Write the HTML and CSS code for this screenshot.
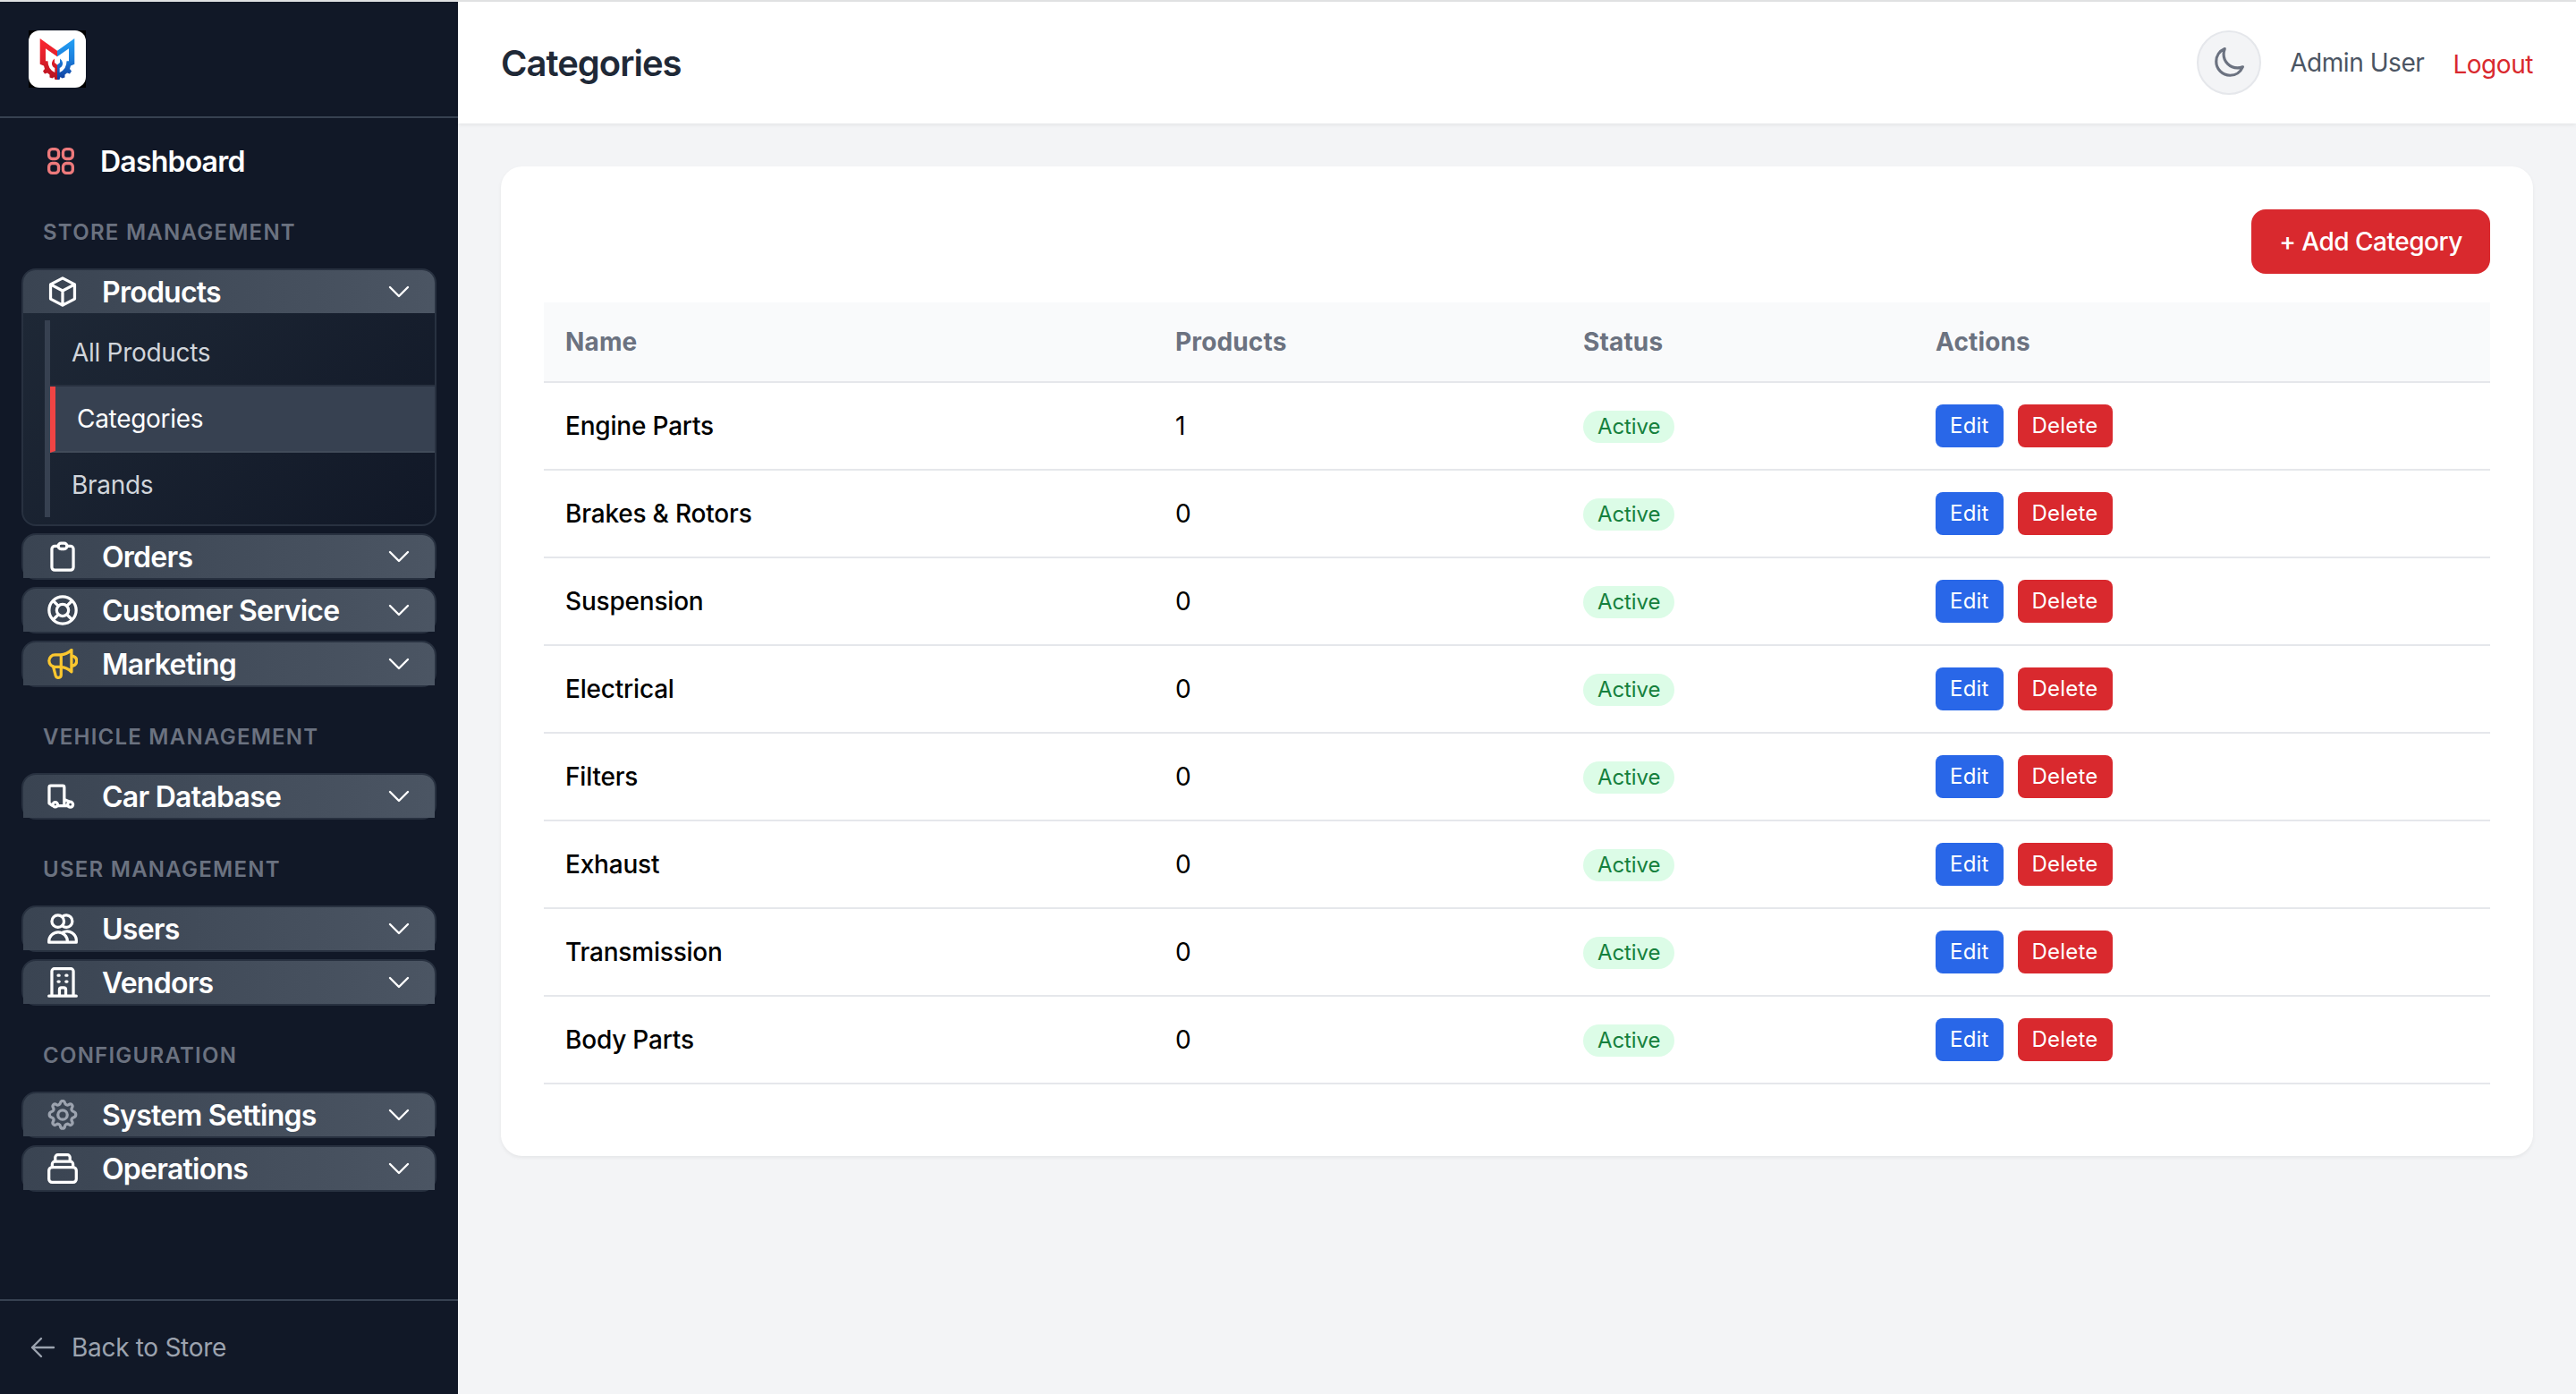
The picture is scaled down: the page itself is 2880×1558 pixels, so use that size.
FILE: index.html
```
<!DOCTYPE html>
<html lang="en">
<head>
	<meta charset="UTF-8">
	<title>Categories</title>
	<link rel="stylesheet" href="styles.css">
</head>
<body>
	<div class="layout">
		<aside class="sidebar">
			<div class="brand">
				<svg class="logo" viewBox="0 0 64 64">
					<defs>
						<linearGradient id="red" x1="0" y1="0" x2="0" y2="1">
							<stop offset="0" stop-color="#fb2530"/>
							<stop offset="0.500" stop-color="#e01f2b"/>
							<stop offset="1" stop-color="#b3121f"/>
						</linearGradient>
						<linearGradient id="blue" x1="0" y1="0" x2="0" y2="1">
							<stop offset="0" stop-color="#22a0f5"/>
							<stop offset="0.500" stop-color="#1c7fdc"/>
							<stop offset="1" stop-color="#0f3c9c"/>
						</linearGradient>
					</defs>
					<rect width="64" height="64" fill="#000"/>
					<rect width="64" height="64" rx="12" fill="#fff"/>
					<path fill="url(#red)" d="M12.700 9 L32 22.700 V29.300 L19 20.300 V34.300 H21.500 Q21.500 43.500 29.300 47 V42 Q25.500 40 26 36 Q26.500 33 29 31.500 V36 L32 38.500 V55 H29.500 L28.500 52 L26.500 53.500 L23.500 52.500 L23.500 49.500 L21 47.500 L18 48.500 L16 45.500 L18 43 L17 39.500 L12.700 37.700 Z"/>
					<path fill="url(#blue)" d="M51.300 9 L32 22.700 V29.300 L45 20.300 V34.300 H42.500 Q42.500 43.500 34.700 47 V42 Q38.500 40 38 36 Q37.500 33 35 31.500 V36 L32 38.500 V55 H34.500 L35.500 52 L37.500 53.500 L40.500 52.500 L40.500 49.500 L43 47.500 L46 48.500 L48 45.500 L46 43 L47 39.500 L51.300 37.700 Z"/>
				</svg>
			</div>

			<nav class="nav">
				<a class="dashboard">
					<svg class="icon icon-red" viewBox="0 0 24 24"><rect x="4" y="4" width="6.500" height="6.500" rx="2.200"/><rect x="13.500" y="4" width="6.500" height="6.500" rx="2.200"/><rect x="4" y="13.500" width="6.500" height="6.500" rx="2.200"/><rect x="13.500" y="13.500" width="6.500" height="6.500" rx="2.200"/></svg>
					<span>Dashboard</span>
				</a>

				<h2 class="section">Store Management</h2>
				<div class="group">
					<div class="group-head">
						<svg class="icon" viewBox="0 0 24 24"><path d="M12 1.300 21.500 6.300V17.700L12 22.700 2.500 17.700V6.300ZM2.500 6.300 12 11.300 21.500 6.300M12 11.300V22.700"/></svg>
						<span>Products</span>
						<svg class="chevron" viewBox="0 0 24 24"><path d="m19.500 8.250-7.500 7.500-7.500-7.500"/></svg>
					</div>
					<div class="submenu">
						<a>All Products</a>
						<a class="current">Categories</a>
						<a>Brands</a>
					</div>
				</div>
				<div class="group">
					<div class="group-head">
						<svg class="icon" viewBox="0 0 24 24"><path d="M8.500 3.800H5.700A2.200 2.200 0 0 0 3.500 6V20.500a2.200 2.200 0 0 0 2.200 2.200h12.600a2.200 2.200 0 0 0 2.200-2.200V6a2.200 2.200 0 0 0-2.200-2.200H15.500"/><rect x="8.500" y="1.500" width="7" height="4.500" rx="2.250"/></svg>
						<span>Orders</span>
						<svg class="chevron" viewBox="0 0 24 24"><path d="m19.500 8.250-7.500 7.500-7.500-7.500"/></svg>
					</div>
				</div>
				<div class="group">
					<div class="group-head">
						<svg class="icon" viewBox="0 0 24 24"><circle cx="12" cy="12" r="10.700"/><circle cx="12" cy="12" r="4.700"/><path d="M4.600 4.600l4 4M15.400 15.400l4 4M19.400 4.600l-4 4M8.600 15.400l-4 4"/></svg>
						<span>Customer Service</span>
						<svg class="chevron" viewBox="0 0 24 24"><path d="m19.500 8.250-7.500 7.500-7.500-7.500"/></svg>
					</div>
				</div>
				<div class="group">
					<div class="group-head">
						<svg class="icon icon-yellow" viewBox="0 0 24 24"><path d="M10.300 14.300H6A4.700 4.700 0 0 1 6 4.900h4.300C13.500 4.700 16.800 3.200 19 1M10.800 4.900v9.400M19 1v17.200M19 18.200c-2.200-2.200-5.400-3.700-8.700-3.900M4.600 14.100 6.500 21.300A2.200 2.200 0 0 0 10.800 20.900V14.300M19 5.500c3 .5 4.100 2 4.100 4.100S22 13.300 19 13.800"/></svg>
						<span>Marketing</span>
						<svg class="chevron" viewBox="0 0 24 24"><path d="m19.500 8.250-7.500 7.500-7.500-7.500"/></svg>
					</div>
				</div>

				<h2 class="section">Vehicle Management</h2>
				<div class="group">
					<div class="group-head">
						<svg class="icon" viewBox="0 0 24 24"><path d="M4 19.300 1.400 17.500V5A1.300 1.300 0 0 1 2.700 3.700H12A1.300 1.300 0 0 1 13.300 5v14.500H8.500M13.300 19.500H16M13.300 14.500 17 16"/><circle cx="6.200" cy="18.500" r="1.900"/><circle cx="18.100" cy="18.500" r="2.100"/></svg>
						<span>Car Database</span>
						<svg class="chevron" viewBox="0 0 24 24"><path d="m19.500 8.250-7.500 7.500-7.500-7.500"/></svg>
					</div>
				</div>

				<h2 class="section">User Management</h2>
				<div class="group">
					<div class="group-head">
						<svg class="icon" viewBox="0 0 24 24"><circle cx="8.300" cy="6.100" r="4.800"/><path d="M11.700 2.500a4.800 4.800 0 1 1 0 7.200M1.200 22.700V22a7.300 7.300 0 0 1 14.600 0v.700ZM12 15a7.300 7.300 0 0 1 10.800 7v.700h-7"/></svg>
						<span>Users</span>
						<svg class="chevron" viewBox="0 0 24 24"><path d="m19.500 8.250-7.500 7.500-7.500-7.500"/></svg>
					</div>
				</div>
				<div class="group">
					<div class="group-head">
						<svg class="icon" viewBox="0 0 24 24"><path d="M1.200 22.700h21.600M3.500 22.700V3.200A2 2 0 0 1 5.500 1.200h13a2 2 0 0 1 2 2v19.500M8.500 6.500h.800M14.700 6.500h.800M8.500 11.300h.800M14.700 11.300h.800M9.500 22.700V17.700a1.500 1.500 0 0 1 1.500-1.500h2a1.500 1.500 0 0 1 1.500 1.500v5"/></svg>
						<span>Vendors</span>
						<svg class="chevron" viewBox="0 0 24 24"><path d="m19.500 8.250-7.500 7.500-7.500-7.500"/></svg>
					</div>
				</div>

				<h2 class="section">Configuration</h2>
				<div class="group">
					<div class="group-head">
						<svg class="icon icon-gray" viewBox="0 0 24 24"><circle cx="12" cy="12" r="3.700"/><path d="M10.200 2.600C10.600.500 13.400.500 13.800 2.600c.300 1.500 1.900 2.100 3.100 1.300 1.700-1.300 3.700.700 2.500 2.500-.800 1.200-.200 2.800 1.300 3.100 2.300.600 2.300 3.900 0 4.500-1.500.300-2.100 1.900-1.300 3.100 1.200 1.900-.700 3.800-2.500 2.500-1.200-.800-2.800-.200-3.100 1.300-.400 2.400-3.200 2.400-3.600 0-.300-1.500-1.900-2.100-3.100-1.300-1.800 1.300-3.700-.600-2.500-2.500.800-1.200.200-2.800-1.300-3.100-2.300-.600-2.300-3.900 0-4.500 1.500-.300 2.100-1.900 1.300-3.100-1.200-1.800.800-3.800 2.500-2.500 1.200.800 2.800.200 3.100-1.300Z"/></svg>
						<span>System Settings</span>
						<svg class="chevron" viewBox="0 0 24 24"><path d="m19.500 8.250-7.500 7.500-7.500-7.500"/></svg>
					</div>
				</div>
				<div class="group">
					<div class="group-head">
						<svg class="icon" viewBox="0 0 24 24"><rect x="1.200" y="11" width="21.600" height="11.800" rx="2.500"/><path d="M3.800 11V8.500A2 2 0 0 1 5.800 6.500h12.400a2 2 0 0 1 2 2V11M6.200 6.500V3.200A2 2 0 0 1 8.200 1.200h7.600a2 2 0 0 1 2 2v3.300"/></svg>
						<span>Operations</span>
						<svg class="chevron" viewBox="0 0 24 24"><path d="m19.500 8.250-7.500 7.500-7.500-7.500"/></svg>
					</div>
				</div>
			</nav>

			<a class="back">
				<svg class="back-icon" viewBox="0 0 24 24"><path d="M10.500 19.500 3 12m0 0 7.500-7.500M3 12h18"/></svg>
				<span>Back to Store</span>
			</a>
		</aside>

		<div class="main">
			<header class="topbar">
				<h1>Categories</h1>
				<div class="user">
					<button class="theme">
						<svg class="moon" viewBox="0 0 24 24"><path d="M21.752 15.002A9.720 9.720 0 0 1 18 15.750c-5.385 0-9.750-4.365-9.750-9.750 0-1.330.266-2.597.748-3.752A9.753 9.753 0 0 0 3 11.250C3 16.635 7.365 21 12.750 21a9.753 9.753 0 0 0 9.002-5.998Z"/></svg>
					</button>
					<span class="username">Admin User</span>
					<a class="logout">Logout</a>
				</div>
			</header>

			<div class="card">
				<div class="toolbar">
					<a class="add">+ Add Category</a>
				</div>
				<table class="table">
					<thead>
						<tr>
							<th class="col-name">Name</th>
							<th class="col-products">Products</th>
							<th class="col-status">Status</th>
							<th>Actions</th>
						</tr>
					</thead>
					<tbody>
						<tr>
							<td class="name">Engine Parts</td>
							<td>1</td>
							<td><span class="badge">Active</span></td>
							<td><div class="actions"><a class="btn edit">Edit</a><a class="btn delete">Delete</a></div></td>
						</tr>
						<tr>
							<td class="name">Brakes &amp; Rotors</td>
							<td>0</td>
							<td><span class="badge">Active</span></td>
							<td><div class="actions"><a class="btn edit">Edit</a><a class="btn delete">Delete</a></div></td>
						</tr>
						<tr>
							<td class="name">Suspension</td>
							<td>0</td>
							<td><span class="badge">Active</span></td>
							<td><div class="actions"><a class="btn edit">Edit</a><a class="btn delete">Delete</a></div></td>
						</tr>
						<tr>
							<td class="name">Electrical</td>
							<td>0</td>
							<td><span class="badge">Active</span></td>
							<td><div class="actions"><a class="btn edit">Edit</a><a class="btn delete">Delete</a></div></td>
						</tr>
						<tr>
							<td class="name">Filters</td>
							<td>0</td>
							<td><span class="badge">Active</span></td>
							<td><div class="actions"><a class="btn edit">Edit</a><a class="btn delete">Delete</a></div></td>
						</tr>
						<tr>
							<td class="name">Exhaust</td>
							<td>0</td>
							<td><span class="badge">Active</span></td>
							<td><div class="actions"><a class="btn edit">Edit</a><a class="btn delete">Delete</a></div></td>
						</tr>
						<tr>
							<td class="name">Transmission</td>
							<td>0</td>
							<td><span class="badge">Active</span></td>
							<td><div class="actions"><a class="btn edit">Edit</a><a class="btn delete">Delete</a></div></td>
						</tr>
						<tr>
							<td class="name">Body Parts</td>
							<td>0</td>
							<td><span class="badge">Active</span></td>
							<td><div class="actions"><a class="btn edit">Edit</a><a class="btn delete">Delete</a></div></td>
						</tr>
					</tbody>
				</table>
			</div>
		</div>
	</div>
</body>
</html>
```
FILE: styles.css
```
* {
	margin: 0;
	padding: 0;
	box-sizing: border-box;
}
body {
	font-family: Inter, "Liberation Sans", sans-serif;
	font-size: 28px;
	letter-spacing: -0.3px;
	background: #f3f4f6;
	color: #000;
}
.layout {
	display: flex;
	height: 1558px;
	overflow: hidden;
	border-top: 2px solid #e0e1e2;
}
svg {
	display: block;
	flex: none;
	fill: none;
	stroke: currentColor;
	stroke-width: 1.5;
	stroke-linecap: round;
	stroke-linejoin: round;
}

/* sidebar */
.sidebar {
	width: 512px;
	flex: none;
	display: flex;
	flex-direction: column;
	background: #111827;
	color: #fff;
}
.brand {
	padding: 32px;
	border-bottom: 2px solid #374151;
}
.logo {
	width: 64px;
	height: 64px;
	stroke: none;
}
.nav {
	flex: 1;
	padding: 24px 24px 0;
}
.icon {
	width: 40px;
	height: 40px;
	stroke-width: 2;
}
.icon-red {
	color: #ee7a7c;
}
.icon-yellow {
	color: #fbc72f;
}
.icon-gray {
	color: #9ca3af;
}
.group-head .icon {
	width: 34px;
	height: 34px;
	margin: 0 3px;
	stroke-width: 2.3;
}
.dashboard {
	display: flex;
	align-items: center;
	gap: 24px;
	height: 48px;
	padding: 0 24px;
	font-size: 32px;
	font-weight: 600;
	letter-spacing: -0.8px;
}
.section {
	padding: 38px 24px 22px;
	font-size: 24px;
	line-height: 36px;
	font-weight: 600;
	letter-spacing: 1.25px;
	text-transform: uppercase;
	color: #6b7280;
}
.group {
	border: 2px solid #283140;
	border-radius: 16px;
	margin-bottom: 8px;
	background: linear-gradient(135deg, #1f2937, #111827);
}
.group:has(+ .section),
.group:last-child {
	margin-bottom: 0;
}
.group-head {
	display: flex;
	align-items: center;
	height: 48px;
	padding: 0 24px;
	border-radius: 14px 14px 0 0;
	background: linear-gradient(90deg, #3a4452, #4b5563);
	font-size: 32px;
	font-weight: 600;
	letter-spacing: -0.75px;
}
.group-head span {
	flex: 1;
	margin-left: 24px;
}
.chevron {
	width: 32px;
	height: 32px;
	stroke-width: 1.8;
}
.submenu {
	margin: 8px 0 8px 24px;
	border-left: 6px solid #374151;
}
.submenu a {
	display: block;
	height: 74px;
	line-height: 72px;
	padding-left: 24px;
	border-bottom: 2px solid #283140;
	color: #d1d5db;
}
.submenu a:last-child {
	height: 72px;
	border-bottom: 0;
}
.submenu .current {
	border-left: 6px solid #ef4444;
	background: #374151;
	border-bottom-color: #414b59;
	color: #fff;
}
.back {
	display: flex;
	align-items: center;
	gap: 16px;
	height: 106px;
	padding-left: 32px;
	border-top: 2px solid #374151;
	color: #9ca3af;
}
.back-icon {
	width: 32px;
	height: 32px;
	stroke-width: 1.8;
}

/* content */
.main {
	flex: 1;
}
.topbar {
	display: flex;
	justify-content: space-between;
	align-items: center;
	height: 136px;
	padding: 0 48px;
	background: #fff;
	box-shadow: 0 2px 4px rgba(0,0,0,0.06);
}
.topbar h1 {
	font-size: 40px;
	font-weight: 600;
	letter-spacing: -1px;
	color: #1f2937;
}
.user {
	display: flex;
	align-items: center;
	gap: 32px;
	letter-spacing: -0.45px;
}
.theme {
	display: flex;
	align-items: center;
	justify-content: center;
	width: 72px;
	height: 72px;
	border: 2px solid #e5e7eb;
	border-radius: 50%;
	background: #f3f4f6;
	color: #6b7280;
}
.moon {
	width: 38px;
	height: 38px;
	stroke-width: 2;
}
.username {
	color: #4b5563;
}
.logout {
	padding-top: 4px;
	color: #d9292e;
}
.card {
	margin: 48px;
	padding: 48px 48px 80px;
	border-radius: 24px;
	background: #fff;
	box-shadow: 0 2px 4px rgba(0,0,0,0.06);
}
.toolbar {
	display: flex;
	justify-content: flex-end;
	margin-bottom: 32px;
}
.add {
	width: 267px;
	height: 72px;
	line-height: 72px;
	border-radius: 16px;
	text-align: center;
	font-weight: 500;
	letter-spacing: -0.5px;
	background: #d9292e;
	color: #fff;
}
.table {
	width: 100%;
	table-layout: fixed;
	border-collapse: separate;
	border-spacing: 0;
}
.table th {
	height: 90px;
	padding: 0 24px;
	border-bottom: 2px solid #e5e7eb;
	text-align: left;
	font-weight: 700;
	letter-spacing: 0.15px;
	background: #f9fafb;
	color: #6b7280;
}
.table td {
	height: 98px;
	padding: 0 24px;
	border-bottom: 2px solid #e5e7eb;
}
.table .name {
	font-weight: 500;
	letter-spacing: -0.2px;
}
.col-name {
	width: 682px;
}
.col-products {
	width: 456px;
}
.col-status {
	width: 394px;
}
.badge {
	display: inline-block;
	padding: 0 16px;
	line-height: 36px;
	border-radius: 18px;
	font-size: 24px;
	letter-spacing: -0.1px;
	background: #dcfce7;
	color: #15803d;
}
.actions {
	display: flex;
	gap: 16px;
}
.btn {
	height: 48px;
	line-height: 48px;
	padding: 0 16px;
	border-radius: 8px;
	font-size: 24px;
	letter-spacing: 0.2px;
	color: #fff;
}
.edit {
	background: #2967e8;
}
.delete {
	background: #d9292e;
}
```
